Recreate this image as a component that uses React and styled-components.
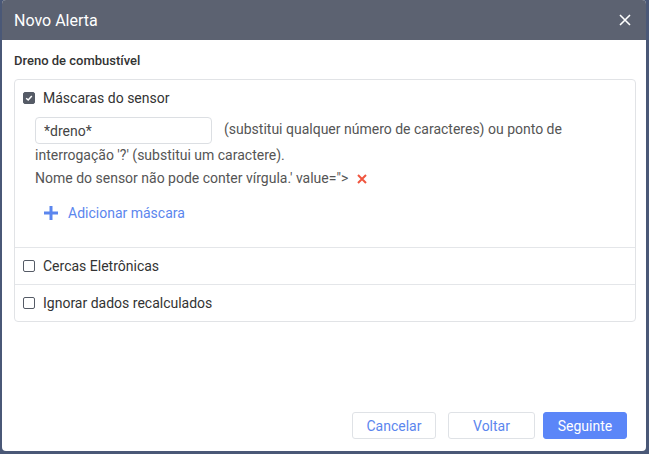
import React from "react";
import styled, { createGlobalStyle } from "styled-components";

const Global = createGlobalStyle`
  html, body { margin: 0; padding: 0; height: 100%; }
  body {
    background: #4a5877;
    font-family: Roboto, "Liberation Sans", Arial, sans-serif;
    overflow: hidden;
  }
  #root { height: 100%; }
`;

const Dialog = styled.div`
  box-sizing: border-box;
  margin: 0 3px 0 2px;
  height: 451px;
  background: #fff;
  border-radius: 4px;
  display: flex;
  flex-direction: column;
  overflow: hidden;
`;

const Header = styled.div`
  height: 40px;
  flex: none;
  background: #5c6271;
  display: flex;
  align-items: center;
  justify-content: space-between;
  padding: 0 13px 0 12px;
`;

const Title = styled.div`
  color: #fff;
  font-size: 16px;
  font-weight: 400;
`;

const CloseButton = styled.button`
  border: 0;
  background: none;
  padding: 0;
  width: 16px;
  height: 16px;
  display: flex;
  align-items: center;
  justify-content: center;
  cursor: pointer;
`;

const Content = styled.div`
  flex: 1;
  padding: 13px 10px 0 12px;
  display: flex;
  flex-direction: column;
`;

const SectionTitle = styled.div`
  font-size: 13px;
  line-height: 15px;
  font-weight: 500;
  color: #333;
`;

const Box = styled.div`
  margin-top: 11px;
  border: 1px solid #e1e3e6;
  border-radius: 4px;
`;

const Row = styled.div`
  padding: ${(p) => p.$pad || "10px 8px"};
  border-top: ${(p) => (p.$first ? "0" : "1px solid #e4e6e9")};
`;

const CheckLine = styled.label`
  display: flex;
  align-items: center;
  gap: 8px;
  font-size: 14px;
  line-height: 16px;
  color: #333;
`;

const Check = styled.span`
  box-sizing: border-box;
  width: 12px;
  height: 12px;
  border-radius: 2px;
  flex: none;
  display: flex;
  align-items: center;
  justify-content: center;
  background: ${(p) => (p.$on ? "#555b66" : "#fff")};
  border: 1px solid #555b66;
`;

const Masks = styled.div`
  margin: 11px 0 0 12px;
  padding-right: 12px;
  font-size: 14px;
  line-height: 23px;
  color: #555;
`;

const MaskInput = styled.input`
  box-sizing: border-box;
  width: 177px;
  height: 27px;
  border: 1px solid #dcdfe3;
  border-radius: 4px;
  padding: 0 8px;
  font-family: inherit;
  font-size: 14px;
  color: #444;
  vertical-align: middle;
  margin-right: 12px;
  outline: none;
`;

const RemoveIcon = styled.span`
  display: inline-block;
  margin-left: 9px;
  vertical-align: -1px;
`;

const AddLink = styled.a`
  display: flex;
  align-items: center;
  gap: 10px;
  margin: 14px 0 0 21px;
  font-size: 14px;
  line-height: 16px;
  color: #5b86ee;
  cursor: pointer;
`;

const Footer = styled.div`
  margin-top: auto;
  display: flex;
  justify-content: flex-end;
  gap: 8px;
  padding: 0 19px 12px 0;
`;

const Button = styled.button`
  box-sizing: border-box;
  height: 27px;
  width: ${(p) => p.$w}px;
  margin-right: ${(p) => p.$mr || 0}px;
  border-radius: 3px;
  font-family: inherit;
  font-size: 14px;
  border: 1px solid ${(p) => (p.$primary ? "#5b86f8" : "#dfe2e6")};
  background: ${(p) => (p.$primary ? "#5b86f8" : "#fff")};
  color: ${(p) => (p.$primary ? "#fff" : "#5b86ee")};
  cursor: pointer;
`;

const CheckMark = () => (
  <svg width="8" height="8" viewBox="0 0 8 8">
    <path d="M1.2 4.2 L3.2 6 L6.8 2" fill="none" stroke="#fff" strokeWidth="1.5" />
  </svg>
);

export default function App() {
  return (
    <>
      <Global />
      <Dialog>
        <Header>
          <Title>Novo Alerta</Title>
          <CloseButton aria-label="close">
            <svg width="12" height="12" viewBox="0 0 12 12">
              <path d="M1 1 L11 11 M11 1 L1 11" stroke="#fff" strokeWidth="1.6" />
            </svg>
          </CloseButton>
        </Header>
        <Content>
          <SectionTitle>Dreno de combustível</SectionTitle>
          <Box>
            <Row $first $pad="10px 8px 26px 8px">
              <CheckLine>
                <Check $on>
                  <CheckMark />
                </Check>
                Máscaras do sensor
              </CheckLine>
              <Masks>
                <MaskInput defaultValue="*dreno*" />
                (substitui qualquer número de caracteres) ou ponto de interrogação '?' (substitui um caractere).
                <br />
                Nome do sensor não pode conter vírgula.' value="&gt;
                <RemoveIcon>
                  <svg width="10" height="10" viewBox="0 0 10 10">
                    <path d="M1 1 L9 9 M9 1 L1 9" stroke="#f0553f" strokeWidth="2" />
                  </svg>
                </RemoveIcon>
              </Masks>
              <AddLink>
                <svg width="14" height="14" viewBox="0 0 14 14">
                  <path d="M7 0 V14 M0 7 H14" stroke="#5b86ee" strokeWidth="3" />
                </svg>
                Adicionar máscara
              </AddLink>
            </Row>
            <Row>
              <CheckLine>
                <Check />
                Cercas Eletrônicas
              </CheckLine>
            </Row>
            <Row>
              <CheckLine>
                <Check />
                Ignorar dados recalculados
              </CheckLine>
            </Row>
          </Box>
        </Content>
        <Footer>
          <Button $w={84} $mr={4}>Cancelar</Button>
          <Button $w={87}>Voltar</Button>
          <Button $w={84} $primary>Seguinte</Button>
        </Footer>
      </Dialog>
    </>
  );
}
